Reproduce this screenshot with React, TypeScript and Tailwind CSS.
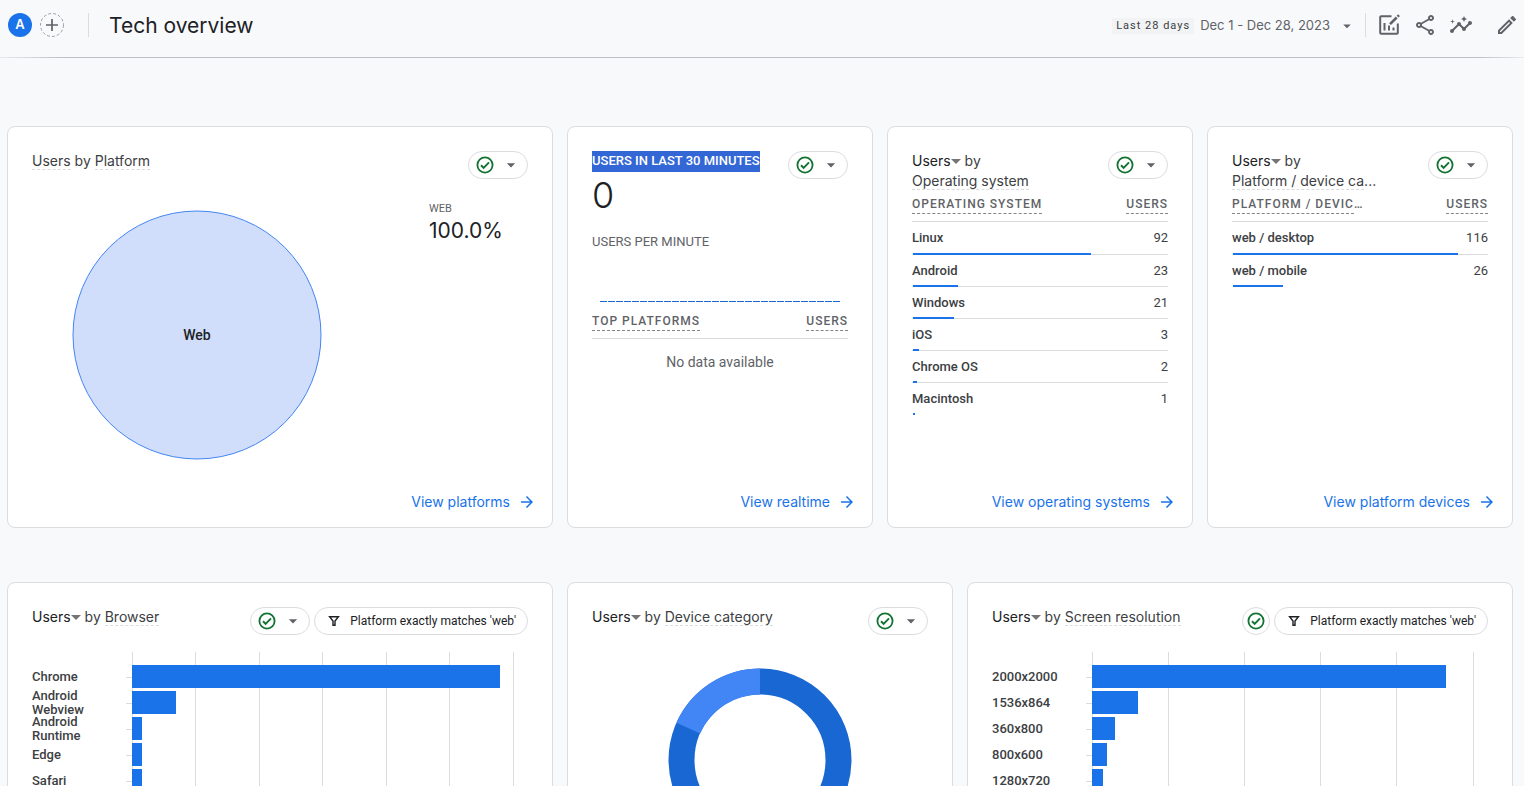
import type { ReactNode } from 'react';
import { MdArrowDropDown, MdArrowForward, MdInsights, MdOutlineEdit, MdOutlineShare } from 'react-icons/md';

interface TableRow {
  label: string;
  users: number;
  share: number;
}

interface Bar {
  label: string;
  share: number;
}

const operatingSystems: TableRow[] = [
  { label: 'Linux', users: 92, share: 69.5 },
  { label: 'Android', users: 23, share: 17.6 },
  { label: 'Windows', users: 21, share: 16 },
  { label: 'iOS', users: 3, share: 2.4 },
  { label: 'Chrome OS', users: 2, share: 1.6 },
  { label: 'Macintosh', users: 1, share: 0.8 },
];

const platformDevices: TableRow[] = [
  { label: 'web / desktop', users: 116, share: 88 },
  { label: 'web / mobile', users: 26, share: 19.6 },
];

const browsers: Bar[] = [
  { label: 'Chrome', share: 96.6 },
  { label: 'Android Webview', share: 11.5 },
  { label: 'Android Runtime', share: 2.6 },
  { label: 'Edge', share: 2.6 },
  { label: 'Safari', share: 2.6 },
];

const resolutions: Bar[] = [
  { label: '2000x2000', share: 92.9 },
  { label: '1536x864', share: 12.1 },
  { label: '360x800', share: 6 },
  { label: '800x600', share: 3.9 },
  { label: '1280x720', share: 2.9 },
];

function Card({ children }: { children: ReactNode }) {
  return (
    <section className="flex min-h-[402px] min-w-0 flex-col rounded-lg border border-[#dadce0] bg-white px-6 pt-6 pb-[15px]">
      {children}
    </section>
  );
}

function MetricButton() {
  return (
    <button className="inline-flex items-center text-[#202124]">
      Users
      <svg viewBox="0 0 10 5" className="h-[5px] w-[10px] fill-[#757575]" aria-hidden="true">
        <path d="M0 0h10L5 5z" />
      </svg>
    </button>
  );
}

function Dotted({ children }: { children: ReactNode }) {
  return <span className="border-b border-dashed border-[#dadce0]">{children}</span>;
}

function CardTitle({ children }: { children: ReactNode }) {
  return <h2 className="font-['Inter',sans-serif] text-sm leading-5 text-[#3c4043]">{children}</h2>;
}

function QualityButton({ menu = true }: { menu?: boolean }) {
  return (
    <button
      aria-label="Data quality"
      className={
        menu
          ? 'flex h-7 w-[60px] shrink-0 items-center justify-between rounded-full border border-[#dadce0] px-[6px]'
          : 'flex size-7 shrink-0 items-center justify-center rounded-full border border-[#dadce0]'
      }
    >
      <svg viewBox="0 0 20 20" className="size-5 fill-none stroke-[#137333]" aria-hidden="true">
        <circle cx="10" cy="10" r="7.6" strokeWidth="1.8" />
        <path d="M6 10.3l2.6 2.5 5.4-5.5" strokeWidth="1.9" />
      </svg>
      {menu && <MdArrowDropDown className="size-5 text-[#5f6368]" />}
    </button>
  );
}

function FilterChip() {
  return (
    <button className="flex h-7 shrink-0 items-center gap-2 rounded-full border border-[#dadce0] px-[11px] text-xs text-[#202124]">
      <svg viewBox="0 0 16 16" className="size-4 fill-none stroke-[#202124]" strokeWidth="1.4" aria-hidden="true">
        <path d="M3.6 3.7h8.8L9 8v4.3H7V8z" />
      </svg>
      Platform exactly matches 'web'
    </button>
  );
}

function ViewLink({ children }: { children: ReactNode }) {
  return (
    <a
      href="#"
      className="-mr-2 mt-auto flex items-center gap-2 self-end font-['Inter',sans-serif] text-sm leading-5 text-[#1a73e8]"
    >
      {children}
      <MdArrowForward className="size-[18px]" />
    </a>
  );
}

function HeadCell({ children, right = false }: { children: ReactNode; right?: boolean }) {
  return (
    <th
      scope="col"
      className={
        right
          ? 'h-[31px] border-b border-[#dadce0] pb-1 text-right text-xs font-medium text-[#5f6368]'
          : 'h-[31px] border-b border-[#dadce0] pb-1 text-left text-xs font-medium text-[#5f6368]'
      }
    >
      {children}
    </th>
  );
}

function HeadLabel({ children }: { children: ReactNode }) {
  return (
    <span className="border-b border-dashed border-[#80868b] pb-[2px] tracking-[1px] uppercase">{children}</span>
  );
}

function UsersTable({ heading, cut = false, rows }: { heading: string; cut?: boolean; rows: TableRow[] }) {
  return (
    <table className="w-full border-separate border-spacing-0 text-[#3c4043]">
      <thead>
        <tr>
          <HeadCell>
            <HeadLabel>{heading}</HeadLabel>
            {cut && '…'}
          </HeadCell>
          <HeadCell right>
            <HeadLabel>Users</HeadLabel>
          </HeadCell>
        </tr>
      </thead>
      <tbody className="text-[13px] leading-5">
        {rows.map((row) => (
          <tr key={row.label} className="group relative h-8">
            <td className="border-[#dadce0] p-0 font-medium group-[:not(:first-child)]:border-t">
              {row.label}
              <span className="absolute bottom-[-1px] left-px z-10 h-[2px] bg-[#1a73e8]" style={{ width: `${row.share}%` }} />
            </td>
            <td className="border-[#dadce0] p-0 text-right group-[:not(:first-child)]:border-t">{row.users}</td>
          </tr>
        ))}
      </tbody>
    </table>
  );
}

function BarChart({ bars, intervals }: { bars: Bar[]; intervals: number }) {
  const lines = Array.from({ length: intervals + 1 }, (_, i) => (i * 100) / intervals);

  return (
    <div className="mt-[17px] flex pr-[15px]">
      <ul className="w-[94px] pt-3 text-[13px] leading-[14px] font-medium text-[#3c4043]">
        {bars.map((bar) => (
          <li key={bar.label} className="flex h-[26px] items-center pr-5">
            {bar.label}
          </li>
        ))}
      </ul>
      <div className="w-[6px] pt-3">
        {bars.map((bar) => (
          <div key={bar.label} className="flex h-[26px] items-center">
            <div className="h-px w-full bg-[#dadce0]" />
          </div>
        ))}
      </div>
      <svg className="h-[300px] flex-1 overflow-visible" shapeRendering="crispEdges" aria-hidden="true">
        {lines.map((x) => (
          <line key={x} x1={`${x}%`} x2={`${x}%`} y1="0" y2="290" stroke="#dadce0" />
        ))}
        {bars.map((bar, i) => (
          <rect key={bar.label} x="0" y={13 + i * 26} width={`${bar.share}%`} height="23" fill="#1a73e8" />
        ))}
      </svg>
    </div>
  );
}

function TopBar() {
  return (
    <header className="shrink-0">
      <div className="flex h-[57px] items-center justify-between pb-[7px]">
        <div className="flex items-center">
          <button
            aria-label="All users"
            className="ml-2 size-6 rounded-full bg-[#1a73e8] text-center font-['Inter',sans-serif] text-[13px] font-semibold text-white"
          >
            A
          </button>
          <button aria-label="Add comparison" className="ml-2 size-6">
            <svg viewBox="0 0 24 24" className="size-6 fill-none" aria-hidden="true">
              <circle cx="12" cy="12" r="11.5" stroke="#9aa0a6" strokeDasharray="3 2" />
              <path d="M12 6v12M6 12h12" stroke="#5f6368" strokeWidth="1.7" />
            </svg>
          </button>
          <div className="ml-6 h-6 w-px bg-[#dadce0]" />
          <h1 className="ml-5 pt-[2px] font-['Inter',sans-serif] text-[21px] leading-7 text-[#202124]">Tech overview</h1>
        </div>
        <div className="flex items-center pr-[5px] text-[#5f6368]">
          <button className="flex items-center pt-px">
            <span className="bg-[#f1f3f4] px-1 text-[11px] leading-4 tracking-[1px] text-[#3c4043]">
              Last 28 days
            </span>
            <span className="ml-[6px] font-['Inter',sans-serif] text-[13px]">Dec 1 - Dec 28, 2023</span>
            <MdArrowDropDown className="ml-2 size-[18px]" />
          </button>
          <div className="ml-[9px] h-6 w-px bg-[#dadce0]" />
          <button aria-label="Customize report" className="ml-[11px]">
            <svg viewBox="0 0 24 24" className="size-6 fill-none stroke-[#5f6368]" strokeWidth="2" aria-hidden="true">
              <path d="M14.5 3.2H4.2a1 1 0 0 0-1 1v15.6a1 1 0 0 0 1 1h15.6a1 1 0 0 0 1-1V10.5" />
              <path d="M7.5 10v7.5M12 12.5v5M16.5 14.5v3" />
              <path d="M13 11.2l6.7-6.7" strokeWidth="2.6" />
              <path d="M20.6 3.6l1.4-1.4" strokeWidth="2.6" />
            </svg>
          </button>
          <button aria-label="Share" className="ml-3">
            <MdOutlineShare className="size-6" />
          </button>
          <button aria-label="Insights" className="ml-3">
            <MdInsights className="size-6" />
          </button>
          <button aria-label="Edit" className="ml-[22px]">
            <MdOutlineEdit className="size-6" />
          </button>
        </div>
      </div>
      <div className="h-px bg-[linear-gradient(to_right,#e8eaed,#bdc1c6_4%,#bdc1c6_97%,#e8eaed)]" />
    </header>
  );
}

export default function App() {
  return (
    <div className="flex h-screen flex-col bg-[#f8f9fb] font-['Roboto',sans-serif]">
      <TopBar />
      <main className="flex-1 overflow-y-auto pt-[68px] pr-[11px] pl-[7px] [scrollbar-width:none]">
        <div className="grid grid-cols-[546fr_306fr_306fr_306fr] gap-[14px]">
          <Card>
            <div className="flex justify-between">
              <CardTitle>
                <Dotted>Users</Dotted> by <Dotted>Platform</Dotted>
              </CardTitle>
              <QualityButton />
            </div>
            <div className="flex justify-between pl-10">
              <svg viewBox="0 0 250 250" className="mt-[31px] size-[250px]">
                <circle cx="125" cy="125" r="124" fill="#d0defb" stroke="#4285f4" />
                <text x="125" y="130" textAnchor="middle" className="fill-[#202124] text-sm font-medium">
                  Web
                </text>
              </svg>
              <dl className="mt-[22px] w-[99px]">
                <dt className="text-[11px] leading-4 text-[#5f6368]">WEB</dt>
                <dd className="font-['Inter',sans-serif] text-[21px] leading-7 text-[#202124]">100.0%</dd>
              </dl>
            </div>
            <ViewLink>View platforms</ViewLink>
          </Card>

          <Card>
            <div className="flex h-[28px] items-start justify-between">
              <h2 className="bg-[#3367d6] pb-px text-[13px] leading-5 font-medium whitespace-nowrap text-white">
                USERS IN LAST 30 MINUTES
              </h2>
              <QualityButton />
            </div>
            <div className="-mt-1 font-['Inter',sans-serif] text-[36px] leading-10 font-light text-[#202124]">0</div>
            <div className="mt-[17px] text-[13px] leading-5 text-[#5f6368]">USERS PER MINUTE</div>
            <div className="mx-2 mt-[49px] mb-[6px] flex gap-px">
              {Array.from({ length: 30 }, (_, i) => (
                <span key={i} className="h-px flex-1 bg-[#1967d2]" />
              ))}
            </div>
            <table className="w-full border-separate border-spacing-0">
              <thead>
                <tr>
                  <HeadCell>
                    <HeadLabel>Top platforms</HeadLabel>
                  </HeadCell>
                  <HeadCell right>
                    <HeadLabel>Users</HeadLabel>
                  </HeadCell>
                </tr>
              </thead>
              <tbody>
                <tr>
                  <td colSpan={2} className="pt-[13px] text-center text-sm text-[#5f6368]">
                    No data available
                  </td>
                </tr>
              </tbody>
            </table>
            <ViewLink>View realtime</ViewLink>
          </Card>

          <Card>
            <div className="flex justify-between">
              <CardTitle>
                <MetricButton /> by
                <br />
                <Dotted>Operating system</Dotted>
              </CardTitle>
              <QualityButton />
            </div>
            <UsersTable heading="Operating system" rows={operatingSystems} />
            <ViewLink>View operating systems</ViewLink>
          </Card>

          <Card>
            <div className="flex justify-between">
              <CardTitle>
                <MetricButton /> by
                <br />
                <Dotted>Platform / device ca</Dotted>...
              </CardTitle>
              <QualityButton />
            </div>
            <UsersTable heading="Platform / devic" cut rows={platformDevices} />
            <ViewLink>View platform devices</ViewLink>
          </Card>
        </div>

        <div className="mt-[54px] grid grid-cols-[546fr_386fr_546fr] gap-[14px]">
          <Card>
            <div className="flex justify-between">
              <CardTitle>
                <MetricButton /> by <Dotted>Browser</Dotted>
              </CardTitle>
              <div className="flex gap-1">
                <QualityButton />
                <FilterChip />
              </div>
            </div>
            <BarChart bars={browsers} intervals={6} />
          </Card>

          <Card>
            <div className="flex justify-between">
              <CardTitle>
                <MetricButton /> by <Dotted>Device category</Dotted>
              </CardTitle>
              <QualityButton />
            </div>
            <svg viewBox="0 0 184 184" className="mt-[33px] size-[184px] self-center fill-none" aria-hidden="true">
              <circle cx="92" cy="92" r="78.5" stroke="#1967d2" strokeWidth="26" />
              <path d="M20.3 60.1A78.5 78.5 0 0 1 92 13.5" stroke="#4285f4" strokeWidth="26" />
            </svg>
          </Card>

          <Card>
            <div className="flex justify-between">
              <CardTitle>
                <MetricButton /> by <Dotted>Screen resolution</Dotted>
              </CardTitle>
              <div className="flex gap-1">
                <QualityButton menu={false} />
                <FilterChip />
              </div>
            </div>
            <BarChart bars={resolutions} intervals={5} />
          </Card>
        </div>
      </main>
    </div>
  );
}
